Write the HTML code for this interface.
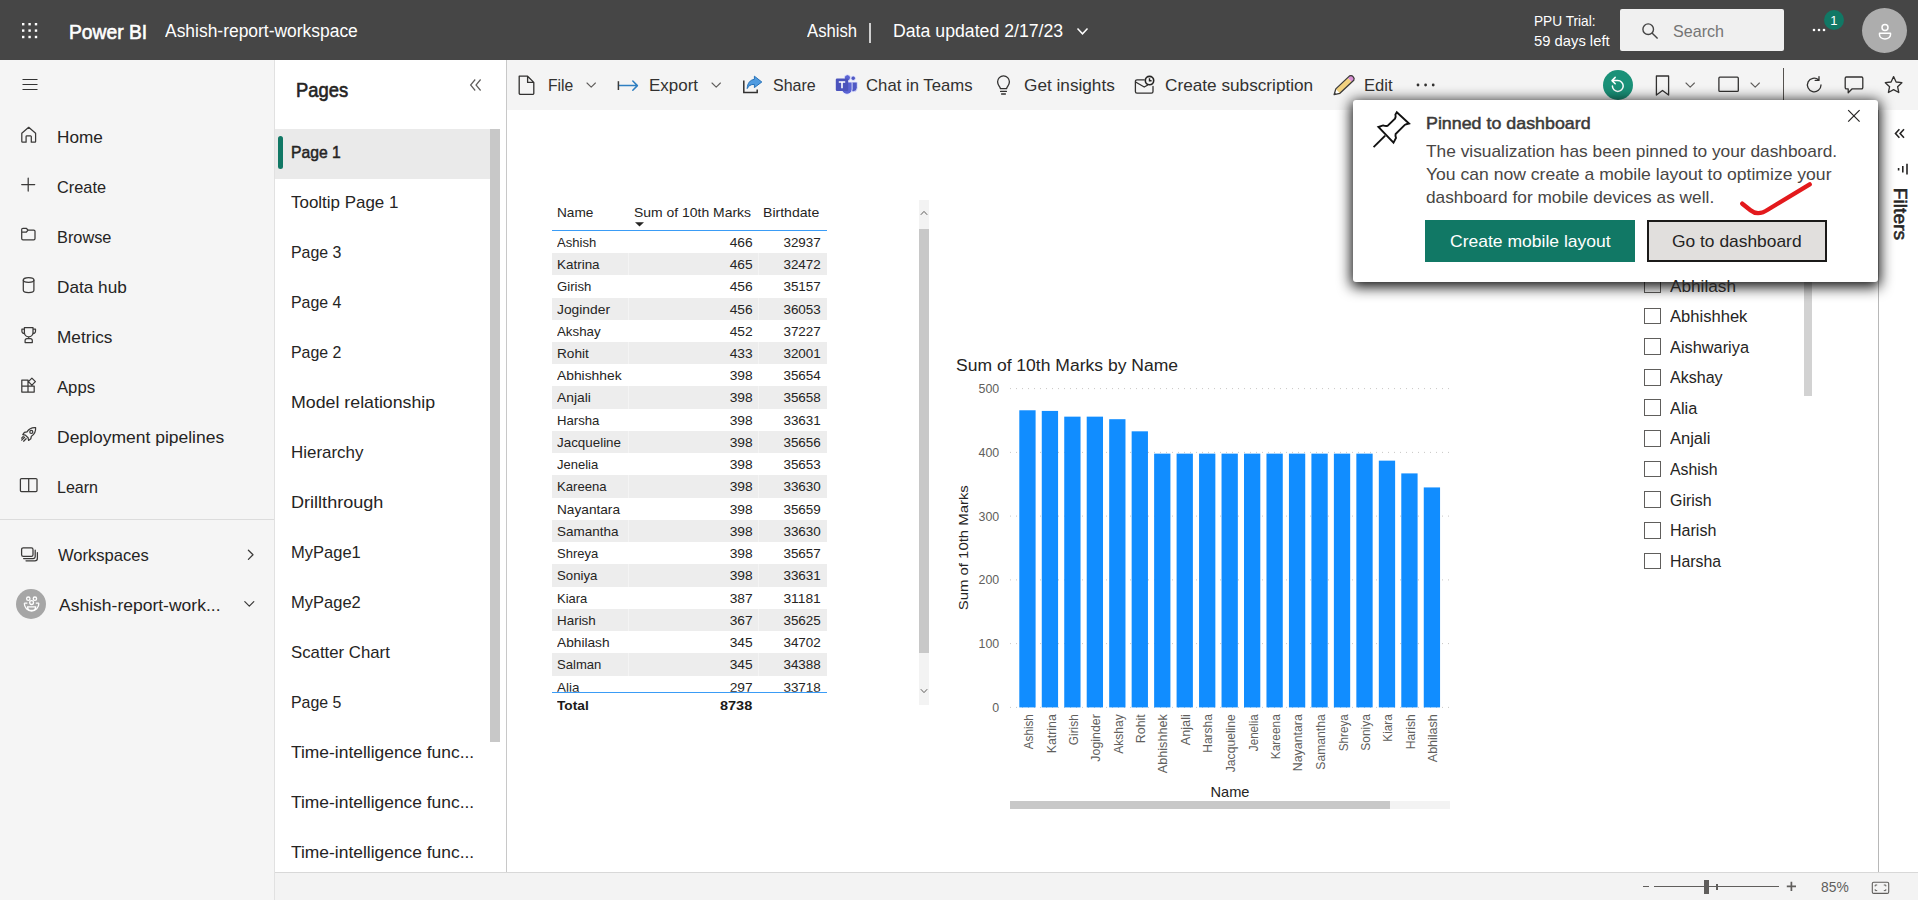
<!DOCTYPE html>
<html><head><meta charset="utf-8"><title>Power BI</title>
<style>
html,body{margin:0;padding:0;}
body{width:1918px;height:900px;overflow:hidden;position:relative;background:#fff;font-family:"Liberation Sans", sans-serif;}
.a{position:absolute;}
svg{position:absolute;overflow:visible;}
</style></head><body>
<div class="a" style="left:0;top:0;width:1918px;height:60px;background:#464646;"></div>
<div class="a" style="left:0;top:60px;width:274px;height:840px;background:#f5f5f5;border-right:1px solid #e1e1e1;"></div>
<div class="a" style="left:275px;top:60px;width:231px;height:812px;background:#fff;border-right:1px solid #c8c8c8;"></div>
<div class="a" style="left:507px;top:60px;width:1411px;height:50px;background:#f4f4f4;"></div>
<div class="a" style="left:275px;top:872px;width:1643px;height:28px;background:#f3f3f3;border-top:1px solid #d8d8d8;box-sizing:border-box;"></div>
<div class="a" style="left:1878px;top:110px;width:1px;height:762px;background:#b8b8b8;"></div>
<svg width="1918" height="60" style="left:0;top:0"><rect x="22.0" y="23.0" width="2.4" height="2.4" fill="#fff"/><rect x="22.0" y="29.4" width="2.4" height="2.4" fill="#fff"/><rect x="22.0" y="35.8" width="2.4" height="2.4" fill="#fff"/><rect x="28.4" y="23.0" width="2.4" height="2.4" fill="#fff"/><rect x="28.4" y="29.4" width="2.4" height="2.4" fill="#fff"/><rect x="28.4" y="35.8" width="2.4" height="2.4" fill="#fff"/><rect x="34.8" y="23.0" width="2.4" height="2.4" fill="#fff"/><rect x="34.8" y="29.4" width="2.4" height="2.4" fill="#fff"/><rect x="34.8" y="35.8" width="2.4" height="2.4" fill="#fff"/></svg>
<div class="a" style="left:869px;top:23px;width:1.5px;height:20px;background:#cfcfcf;"></div>
<svg width="14" height="10" style="left:1076px;top:27px"><path d="M1.5 1.5 L6.5 6.8 L11.5 1.5" fill="none" stroke="#fff" stroke-width="1.5"/></svg>
<div class="a" style="left:1620px;top:9px;width:164px;height:42px;background:#f0f0f0;border-radius:2px;"></div>
<svg width="20" height="20" style="left:1641.4px;top:22px"><circle cx="7.2" cy="7.2" r="5.3" fill="none" stroke="#444" stroke-width="1.4"/><path d="M11 11 L16.6 16.6" stroke="#444" stroke-width="1.4" fill="none"/></svg>
<svg width="20" height="6" style="left:1811px;top:27.3px"><circle cx="3" cy="3" r="1.3" fill="#fff"/><circle cx="8" cy="3" r="1.3" fill="#fff"/><circle cx="13" cy="3" r="1.3" fill="#fff"/></svg>
<div class="a" style="left:1823.9px;top:10.3px;width:20px;height:20px;border-radius:50%;background:#117865;"></div>
<div class="a" style="left:1862px;top:8px;width:45px;height:45px;border-radius:50%;background:#adadad;"></div>
<svg width="20" height="20" style="left:1874.5px;top:21.8px"><circle cx="10" cy="5.5" r="3" fill="none" stroke="#fff" stroke-width="1.5"/><path d="M4.5 11.2 h11 v1.6 a5.5 4.2 0 0 1 -11 0 z" fill="none" stroke="#fff" stroke-width="1.5" stroke-linejoin="round"/></svg>
<svg width="20" height="14" style="left:22px;top:78px"><path d="M0.5 1.5h15M0.5 6.5h15M0.5 11.5h15" stroke="#333" stroke-width="1.2" fill="none"/></svg>
<div class="a" style="left:0;top:519px;width:274px;height:1px;background:#dcdcdc;"></div>
<svg width="20" height="20" style="left:19px;top:125px"><path d="M2.8 8.3 L9.7 2.3 L16.6 8.3 V16.4 a0.8 0.8 0 0 1 -0.8 0.8 H12.3 V11.6 a0.7 0.7 0 0 0 -0.7 -0.7 H7.8 a0.7 0.7 0 0 0 -0.7 0.7 V17.2 H3.6 a0.8 0.8 0 0 1 -0.8 -0.8 Z" fill="none" stroke="#3b3a39" stroke-width="1.25" stroke-linejoin="round" stroke-linecap="round"/></svg>
<svg width="20" height="20" style="left:19px;top:175px"><path d="M9.2 3 V16 M2.7 9.5 H15.7" fill="none" stroke="#3b3a39" stroke-width="1.25" stroke-linejoin="round" stroke-linecap="round"/></svg>
<svg width="20" height="20" style="left:19px;top:225px"><path d="M2.7 6.2 V4.6 a1.3 1.3 0 0 1 1.3 -1.3 H7.2 l1.8 1.7 H14.7 a1.3 1.3 0 0 1 1.3 1.3 V13.6 a1.3 1.3 0 0 1 -1.3 1.3 H4 a1.3 1.3 0 0 1 -1.3 -1.3 Z M2.7 7 H7.4 l1.7 -1.9" fill="none" stroke="#3b3a39" stroke-width="1.25" stroke-linejoin="round" stroke-linecap="round"/></svg>
<svg width="20" height="20" style="left:19px;top:275px"><ellipse cx="9.6" cy="5" rx="5.3" ry="2.3" fill="none" stroke="#3b3a39" stroke-width="1.25" stroke-linejoin="round" stroke-linecap="round"/><path d="M4.3 5 V15.2 a5.3 2.3 0 0 0 10.6 0 V5" fill="none" stroke="#3b3a39" stroke-width="1.25" stroke-linejoin="round" stroke-linecap="round"/></svg>
<svg width="20" height="20" style="left:19px;top:325px"><path d="M5.4 2.6 H14 V7.6 a4.3 4.3 0 0 1 -8.6 0 Z M5.4 4.2 H2.9 V6.2 a2.4 2.4 0 0 0 2.7 2.3 M14 4.2 H16.5 V6.2 a2.4 2.4 0 0 1 -2.7 2.3 M9.7 12 V13.6 M6.1 17.6 V15.4 a1.7 1.7 0 0 1 1.7 -1.7 H11.6 a1.7 1.7 0 0 1 1.7 1.7 V17.6 Z" fill="none" stroke="#3b3a39" stroke-width="1.25" stroke-linejoin="round" stroke-linecap="round"/></svg>
<svg width="20" height="20" style="left:19px;top:375px"><path d="M2.8 5 H9 V17 H2.8 Z M2.8 11 H15.2 V17 H9 M9.4 6.6 L12.9 3.1 L16.4 6.6 L12.9 10.1 Z" fill="none" stroke="#3b3a39" stroke-width="1.25" stroke-linejoin="round" stroke-linecap="round"/></svg>
<svg width="20" height="20" style="left:19px;top:425px"><path d="M16.6 2.6 c-3.6 -0.3 -6.6 1 -8.6 4.2 l-2.6 0.6 l-1.6 2.2 l2.6 0.5 l2.7 2.7 l0.5 2.6 l2.2 -1.6 l0.6 -2.6 c3.2 -2 4.5 -5 4.2 -8.6 Z" fill="none" stroke="#3b3a39" stroke-width="1.25" stroke-linejoin="round" stroke-linecap="round"/><circle cx="12.3" cy="6.9" r="1.5" fill="none" stroke="#3b3a39" stroke-width="1.25" stroke-linejoin="round" stroke-linecap="round"/><path d="M5.6 12.2 L2.7 15.1 M7.1 13.7 L4.6 16.2 M4.3 11.4 L2.6 13.1" fill="none" stroke="#3b3a39" stroke-width="1.25" stroke-linejoin="round" stroke-linecap="round"/></svg>
<svg width="20" height="20" style="left:19px;top:475px"><path d="M1.4 4.6 a1.1 1.1 0 0 1 1.1 -1.1 H9.7 V16.6 H2.5 a1.1 1.1 0 0 1 -1.1 -1.1 Z M9.7 3.5 H16.9 a1.1 1.1 0 0 1 1.1 1.1 V15.5 a1.1 1.1 0 0 1 -1.1 1.1 H9.7" fill="none" stroke="#3b3a39" stroke-width="1.25" stroke-linejoin="round" stroke-linecap="round"/></svg>
<svg width="22" height="20" style="left:19.2px;top:544.5px"><rect x="2.6" y="2.8" width="11.4" height="8.6" rx="1.6" fill="none" stroke="#3b3a39" stroke-width="1.25" stroke-linejoin="round" stroke-linecap="round"/><path d="M4.6 13.6 H14.2 a2 2 0 0 0 2 -2 V5.2 M7 15.8 H15.8 a2.6 2.6 0 0 0 2.6 -2.6 V7.6" fill="none" stroke="#3b3a39" stroke-width="1.25" stroke-linejoin="round" stroke-linecap="round"/></svg>
<svg width="10" height="14" style="left:246px;top:547.5px"><path d="M2.4 2.2 L7 6.8 L2.4 11.4" fill="none" stroke="#3b3a39" stroke-width="1.25" stroke-linejoin="round" stroke-linecap="round"/></svg>
<div class="a" style="left:16px;top:589px;width:30px;height:30px;border-radius:50%;background:#a6a6a6;"></div>
<svg width="1918" height="900" style="left:0;top:0"><g fill="none" stroke="#fff" stroke-width="1.3"><circle cx="28.3" cy="598.7" r="1.7"/><circle cx="34.9" cy="598.7" r="1.7"/><circle cx="31.6" cy="602.6" r="1.9"/><path d="M24.3 603.2 H27.4 M35.8 603.2 H38.9 M24.3 603.2 a7.3 7.8 0 0 0 14.6 0 M27.6 606.9 H35.6 a4 3.6 0 0 1 -8 0 Z"/></g></svg>
<svg width="14" height="10" style="left:243px;top:600px"><path d="M1.8 1.6 L6.3 6.1 L10.8 1.6" fill="none" stroke="#3b3a39" stroke-width="1.25" stroke-linejoin="round" stroke-linecap="round"/></svg>
<svg width="14" height="14" style="left:469px;top:78px"><path d="M6.2 1.5 L1.6 7 L6.2 12.5 M11.6 1.5 L7 7 L11.6 12.5" fill="none" stroke="#605e5c" stroke-width="1.2"/></svg>
<div class="a" style="left:275px;top:129px;width:215px;height:49.5px;background:#eaeaea;"></div>
<div class="a" style="left:278px;top:136px;width:5px;height:32.5px;background:#117865;border-radius:2.5px;"></div>
<div class="a" style="left:490px;top:129px;width:10px;height:613px;background:#c8c8c8;"></div>
<svg width="20" height="22" style="left:517px;top:75px"><path d="M2.2 1.2 H10.6 L16.8 7.4 V18.2 a1.2 1.2 0 0 1 -1.2 1.2 H3.4 a1.2 1.2 0 0 1 -1.2 -1.2 Z M10.6 1.2 V7.4 H16.8" fill="none" stroke="#323130" stroke-width="1.3" stroke-linejoin="round" stroke-linecap="round"/></svg>
<svg width="12" height="8" style="left:586px;top:82px"><path d="M1 1 L5.2 5.2 L9.4 1" fill="none" stroke="#605e5c" stroke-width="1.1" stroke-linejoin="round" stroke-linecap="round"/></svg>
<svg width="22" height="14" style="left:617px;top:79px"><path d="M1.6 6.6 H20.4 M15.8 2 L20.4 6.6 L15.8 11.2" fill="none" stroke="#2f7fc1" stroke-width="1.5" stroke-linejoin="round" stroke-linecap="round"/><path d="M1.4 2.2 V11" fill="none" stroke="#3b3a39" stroke-width="1.5"/></svg>
<svg width="12" height="8" style="left:710.5px;top:82px"><path d="M1 1 L5.2 5.2 L9.4 1" fill="none" stroke="#605e5c" stroke-width="1.1" stroke-linejoin="round" stroke-linecap="round"/></svg>
<svg width="22" height="22" style="left:742px;top:74px"><path d="M1.8 6.4 V18.6 H15.2 V15.4" fill="none" stroke="#323130" stroke-width="1.5"/><path d="M12.4 2.2 L19.8 8 L12.4 13.6 V10.4 C8.6 10.2 6.4 12 5.2 14.6 C5.4 9.4 8 5.8 12.4 5.4 Z" fill="#4f9be0" stroke="#2571b8" stroke-width="1" stroke-linejoin="round"/></svg>
<svg width="24" height="22" style="left:835px;top:74px"><g stroke="#e8eaff" stroke-width="0.9"><circle cx="18.2" cy="4.2" r="2.3" fill="#4f58c4"/><path d="M15.4 8 H21.4 a0.9 0.9 0 0 1 0.9 0.9 V13.8 a3.9 3.9 0 0 1 -3.9 3.9 H16.4 Z" fill="#4f58c4"/><circle cx="12.4" cy="3.8" r="3.1" fill="#5a63d3"/><path d="M7 8 H16.2 a0.9 0.9 0 0 1 0.9 0.9 V15.2 a5.1 5.1 0 0 1 -10.2 0 Z" fill="#5a63d3"/></g><rect x="0.8" y="4.6" width="12.4" height="12.4" rx="1.2" fill="#4b53bc"/><path d="M3.8 8 H10.2 M7 8 V14.2" stroke="#fff" stroke-width="1.6" fill="none"/></svg>
<svg width="18" height="24" style="left:995px;top:74px"><path d="M5.4 14.6 C5 12.6 2.6 11.4 2.6 7.8 a5.9 5.9 0 0 1 11.8 0 C14.4 11.4 12 12.6 11.6 14.6 Z M5.6 17.4 H11.4 M6.6 20 H10.4" fill="none" stroke="#323130" stroke-width="1.3" stroke-linejoin="round" stroke-linecap="round"/></svg>
<svg width="24" height="22" style="left:1134px;top:75px"><path d="M10.2 4.8 H3 a1.6 1.6 0 0 0 -1.6 1.6 V16.6 a1.6 1.6 0 0 0 1.6 1.6 H17.4 a1.6 1.6 0 0 0 1.6 -1.6 V11.4 M1.6 7 L10.2 12 L13.4 10.2" fill="none" stroke="#323130" stroke-width="1.3" stroke-linejoin="round" stroke-linecap="round"/><circle cx="15.5" cy="5.6" r="4.2" fill="none" stroke="#252423" stroke-width="1.6"/><path d="M15.5 3.2 V5.8 H17.6" fill="none" stroke="#252423" stroke-width="1.4"/></svg>
<svg width="1918" height="900" style="left:0;top:0"><path d="M1334.1 94.7 L1339.9 93.3 L1335.8 88.9 Z" fill="#fff"/><path d="M1339.9 93.3 L1351.8 82.1 L1347.7 77.7 L1335.8 88.9 Z" fill="#f2d27e"/><path d="M1351.8 82.1 L1353.8 80.2 Q1354.8 78.2 1353.1 76.7 Q1351.7 75.0 1349.6 75.9 L1347.7 77.7 Z" fill="#d88fd3"/><path d="M1334.1 94.7 L1336.3 94.2 L1334.8 92.5 Z" fill="#3b3a39"/><path d="M1334.1 94.7 L1339.9 93.3 L1353.8 80.2 Q1354.8 78.2 1353.1 76.7 Q1351.7 75.0 1349.6 75.9 L1335.8 88.9 Z" fill="none" stroke="#3b3a39" stroke-width="1.3" stroke-linejoin="round"/></svg>
<svg width="22" height="6" style="left:1415px;top:82px"><circle cx="3" cy="3" r="1.4" fill="#323130"/><circle cx="10.6" cy="3" r="1.4" fill="#323130"/><circle cx="18.2" cy="3" r="1.4" fill="#323130"/></svg>
<div class="a" style="left:1602.7px;top:70.3px;width:30px;height:30px;border-radius:50%;background:#1a9178;"></div>
<svg width="20" height="20" style="left:1608px;top:75px"><path d="M4.4 5.6 H9.8 a5.4 5.4 0 1 1 -5.4 5.4 M7.2 2.4 L4 5.6 L7.2 8.8" fill="none" stroke="#fff" stroke-width="1.5" stroke-linecap="round" stroke-linejoin="round"/></svg>
<svg width="16" height="22" style="left:1655px;top:74.7px"><path d="M1.4 1 H13.6 V20 L7.5 15.4 L1.4 20 Z" fill="none" stroke="#323130" stroke-width="1.3" stroke-linejoin="round" stroke-linecap="round"/></svg>
<svg width="12" height="8" style="left:1685px;top:82px"><path d="M1 1 L5.2 5.2 L9.4 1" fill="none" stroke="#605e5c" stroke-width="1.1" stroke-linejoin="round" stroke-linecap="round"/></svg>
<svg width="22" height="18" style="left:1717.5px;top:76px"><rect x="0.9" y="1.2" width="19.4" height="14.2" rx="1" fill="none" stroke="#323130" stroke-width="1.3" stroke-linejoin="round" stroke-linecap="round"/></svg>
<svg width="12" height="8" style="left:1750px;top:82px"><path d="M1 1 L5.2 5.2 L9.4 1" fill="none" stroke="#605e5c" stroke-width="1.1" stroke-linejoin="round" stroke-linecap="round"/></svg>
<div class="a" style="left:1783px;top:68px;width:1px;height:42px;background:#55524f;"></div>
<svg width="20" height="20" style="left:1805px;top:75px"><path d="M16 10 a6.8 6.8 0 1 1 -2.4 -5.2 M14 1.6 V5.4 H10.2" fill="none" stroke="#323130" stroke-width="1.3" stroke-linejoin="round" stroke-linecap="round"/></svg>
<svg width="22" height="20" style="left:1843.5px;top:76px"><path d="M2.4 1 H17.6 a1.2 1.2 0 0 1 1.2 1.2 V11.6 a1.2 1.2 0 0 1 -1.2 1.2 H8.2 L4.2 16.8 V12.8 H2.4 a1.2 1.2 0 0 1 -1.2 -1.2 V2.2 a1.2 1.2 0 0 1 1.2 -1.2 Z" fill="none" stroke="#323130" stroke-width="1.3" stroke-linejoin="round" stroke-linecap="round"/></svg>
<svg width="20" height="20" style="left:1884px;top:75px"><path d="M9.6 1.6 L12.1 7 L17.9 7.7 L13.6 11.7 L14.8 17.5 L9.6 14.6 L4.4 17.5 L5.6 11.7 L1.3 7.7 L7.1 7 Z" fill="none" stroke="#323130" stroke-width="1.3" stroke-linejoin="round" stroke-linecap="round"/></svg>
<div class="a" style="left:551.7px;top:230.8px;width:275.3px;height:461.2px;overflow:hidden;"><div class="a" style="left:0;top:22.24px;width:276px;height:22.24px;background:#ededed;"></div><div class="a" style="left:76px;top:22.24px;width:1px;height:22.24px;background:#f4f4f4;"></div><div class="a" style="left:206px;top:22.24px;width:1px;height:22.24px;background:#f4f4f4;"></div><div class="a" style="left:0;top:66.72px;width:276px;height:22.24px;background:#ededed;"></div><div class="a" style="left:76px;top:66.72px;width:1px;height:22.24px;background:#f4f4f4;"></div><div class="a" style="left:206px;top:66.72px;width:1px;height:22.24px;background:#f4f4f4;"></div><div class="a" style="left:0;top:111.20px;width:276px;height:22.24px;background:#ededed;"></div><div class="a" style="left:76px;top:111.20px;width:1px;height:22.24px;background:#f4f4f4;"></div><div class="a" style="left:206px;top:111.20px;width:1px;height:22.24px;background:#f4f4f4;"></div><div class="a" style="left:0;top:155.68px;width:276px;height:22.24px;background:#ededed;"></div><div class="a" style="left:76px;top:155.68px;width:1px;height:22.24px;background:#f4f4f4;"></div><div class="a" style="left:206px;top:155.68px;width:1px;height:22.24px;background:#f4f4f4;"></div><div class="a" style="left:0;top:200.16px;width:276px;height:22.24px;background:#ededed;"></div><div class="a" style="left:76px;top:200.16px;width:1px;height:22.24px;background:#f4f4f4;"></div><div class="a" style="left:206px;top:200.16px;width:1px;height:22.24px;background:#f4f4f4;"></div><div class="a" style="left:0;top:244.64px;width:276px;height:22.24px;background:#ededed;"></div><div class="a" style="left:76px;top:244.64px;width:1px;height:22.24px;background:#f4f4f4;"></div><div class="a" style="left:206px;top:244.64px;width:1px;height:22.24px;background:#f4f4f4;"></div><div class="a" style="left:0;top:289.12px;width:276px;height:22.24px;background:#ededed;"></div><div class="a" style="left:76px;top:289.12px;width:1px;height:22.24px;background:#f4f4f4;"></div><div class="a" style="left:206px;top:289.12px;width:1px;height:22.24px;background:#f4f4f4;"></div><div class="a" style="left:0;top:333.60px;width:276px;height:22.24px;background:#ededed;"></div><div class="a" style="left:76px;top:333.60px;width:1px;height:22.24px;background:#f4f4f4;"></div><div class="a" style="left:206px;top:333.60px;width:1px;height:22.24px;background:#f4f4f4;"></div><div class="a" style="left:0;top:378.08px;width:276px;height:22.24px;background:#ededed;"></div><div class="a" style="left:76px;top:378.08px;width:1px;height:22.24px;background:#f4f4f4;"></div><div class="a" style="left:206px;top:378.08px;width:1px;height:22.24px;background:#f4f4f4;"></div><div class="a" style="left:0;top:422.56px;width:276px;height:22.24px;background:#ededed;"></div><div class="a" style="left:76px;top:422.56px;width:1px;height:22.24px;background:#f4f4f4;"></div><div class="a" style="left:206px;top:422.56px;width:1px;height:22.24px;background:#f4f4f4;"></div></div>
<svg width="10" height="6" style="left:634.5px;top:221.5px"><path d="M0 0.3 H9 L4.5 4.6 Z" fill="#252423"/></svg>
<div class="a" style="left:551.7px;top:229.6px;width:275.3px;height:1.2px;background:#3a9cf6;"></div>
<div class="a" style="left:551.7px;top:691.6px;width:275.3px;height:1.2px;background:#3a9cf6;"></div>
<div class="a" style="left:919.2px;top:200px;width:10px;height:505px;background:#f3f3f3;"></div>
<div class="a" style="left:919.2px;top:228.5px;width:10px;height:424px;background:#c8c8c8;"></div>
<svg width="10" height="8" style="left:919.2px;top:209px"><path d="M1.8 5.8 L5 2.4 L8.2 5.8" fill="none" stroke="#605e5c" stroke-width="1"/></svg>
<svg width="10" height="8" style="left:919.2px;top:687px"><path d="M1.8 2.2 L5 5.6 L8.2 2.2" fill="none" stroke="#605e5c" stroke-width="1"/></svg>
<svg width="1918" height="900" style="left:0;top:0"><path d="M1010 707.4 H1450" stroke="#c9c7c5" stroke-width="1" stroke-dasharray="1 5" fill="none"/><path d="M1010 643.6 H1450" stroke="#c9c7c5" stroke-width="1" stroke-dasharray="1 5" fill="none"/><path d="M1010 579.9 H1450" stroke="#c9c7c5" stroke-width="1" stroke-dasharray="1 5" fill="none"/><path d="M1010 516.1 H1450" stroke="#c9c7c5" stroke-width="1" stroke-dasharray="1 5" fill="none"/><path d="M1010 452.4 H1450" stroke="#c9c7c5" stroke-width="1" stroke-dasharray="1 5" fill="none"/><path d="M1010 388.6 H1450" stroke="#c9c7c5" stroke-width="1" stroke-dasharray="1 5" fill="none"/><rect x="1019.30" y="410.28" width="16.3" height="297.12" fill="#118dff"/><rect x="1041.77" y="410.92" width="16.3" height="296.48" fill="#118dff"/><rect x="1064.24" y="416.65" width="16.3" height="290.75" fill="#118dff"/><rect x="1086.71" y="416.65" width="16.3" height="290.75" fill="#118dff"/><rect x="1109.18" y="419.20" width="16.3" height="288.20" fill="#118dff"/><rect x="1131.65" y="431.32" width="16.3" height="276.08" fill="#118dff"/><rect x="1154.12" y="453.64" width="16.3" height="253.76" fill="#118dff"/><rect x="1176.59" y="453.64" width="16.3" height="253.76" fill="#118dff"/><rect x="1199.06" y="453.64" width="16.3" height="253.76" fill="#118dff"/><rect x="1221.53" y="453.64" width="16.3" height="253.76" fill="#118dff"/><rect x="1244.00" y="453.64" width="16.3" height="253.76" fill="#118dff"/><rect x="1266.47" y="453.64" width="16.3" height="253.76" fill="#118dff"/><rect x="1288.94" y="453.64" width="16.3" height="253.76" fill="#118dff"/><rect x="1311.41" y="453.64" width="16.3" height="253.76" fill="#118dff"/><rect x="1333.88" y="453.64" width="16.3" height="253.76" fill="#118dff"/><rect x="1356.35" y="453.64" width="16.3" height="253.76" fill="#118dff"/><rect x="1378.82" y="460.65" width="16.3" height="246.75" fill="#118dff"/><rect x="1401.29" y="473.40" width="16.3" height="234.00" fill="#118dff"/><rect x="1423.76" y="487.43" width="16.3" height="219.97" fill="#118dff"/></svg>
<div class="a" style="left:1010px;top:801px;width:440px;height:8px;background:#f3f3f3;"></div>
<div class="a" style="left:1010px;top:801px;width:380px;height:8px;background:#c8c8c8;"></div>
<div class="a" style="left:1644px;top:275.7px;width:14.9px;height:14.9px;border:1px solid #605e5c;background:#fff;"></div>
<div class="a" style="left:1644px;top:307.5px;width:14.9px;height:14.9px;border:1px solid #605e5c;background:#fff;"></div>
<div class="a" style="left:1644px;top:338.1px;width:14.9px;height:14.9px;border:1px solid #605e5c;background:#fff;"></div>
<div class="a" style="left:1644px;top:368.8px;width:14.9px;height:14.9px;border:1px solid #605e5c;background:#fff;"></div>
<div class="a" style="left:1644px;top:399.4px;width:14.9px;height:14.9px;border:1px solid #605e5c;background:#fff;"></div>
<div class="a" style="left:1644px;top:430.0px;width:14.9px;height:14.9px;border:1px solid #605e5c;background:#fff;"></div>
<div class="a" style="left:1644px;top:460.6px;width:14.9px;height:14.9px;border:1px solid #605e5c;background:#fff;"></div>
<div class="a" style="left:1644px;top:491.2px;width:14.9px;height:14.9px;border:1px solid #605e5c;background:#fff;"></div>
<div class="a" style="left:1644px;top:521.9px;width:14.9px;height:14.9px;border:1px solid #605e5c;background:#fff;"></div>
<div class="a" style="left:1644px;top:552.5px;width:14.9px;height:14.9px;border:1px solid #605e5c;background:#fff;"></div>
<div class="a" style="left:1803.6px;top:260px;width:8px;height:136px;background:#d2d2d2;"></div>
<svg width="12" height="12" style="left:1894px;top:128px"><path d="M5.4 1.2 L1.5 5.5 L5.4 9.8 M10 1.2 L6.1 5.5 L10 9.8" fill="none" stroke="#252423" stroke-width="1.6"/></svg>
<svg width="14" height="14" style="left:1896px;top:162.6px"><path d="M11 0.8 V11.6 M6.8 2.9 V9.5 M2.6 5 V7.4" fill="none" stroke="#252423" stroke-width="1.6"/></svg>
<div class="a" style="left:1643px;top:885.6px;width:6px;height:1.7px;background:#605e5c;"></div>
<div class="a" style="left:1654px;top:886px;width:125px;height:1px;background:#605e5c;"></div>
<div class="a" style="left:1704px;top:880px;width:5.2px;height:14px;background:#605e5c;"></div>
<div class="a" style="left:1716.2px;top:884.2px;width:1.5px;height:5.6px;background:#605e5c;"></div>
<svg width="12" height="12" style="left:1786px;top:881px"><path d="M5.4 0.8 V10 M0.8 5.4 H10" stroke="#605e5c" stroke-width="1.7" fill="none"/></svg>
<svg width="20" height="14" style="left:1871px;top:881px"><rect x="1.3" y="1.2" width="16.4" height="11.2" rx="1.4" fill="none" stroke="#605e5c" stroke-width="1.1"/><path d="M4.2 5.4 V4 H6.2 M12.8 4 H14.8 V5.4 M14.8 8.2 V9.6 H12.8 M6.2 9.6 H4.2 V8.2" fill="none" stroke="#605e5c" stroke-width="1"/></svg>
<div class="a" style="left:1353px;top:100px;width:525px;height:181.8px;background:#fff;border-radius:3px;box-shadow:0 3px 14px 1.5px rgba(0,0,0,0.95);"></div>
<svg width="1918" height="900" style="left:0;top:0"><path d="M1396.8 112.2 L1409 123.5 C1407 124 1405.6 124.2 1404.8 124.9 L1395.6 134 C1395.2 135.4 1395.6 136.8 1396 138 L1393.5 142.6 L1378.4 127 L1383 125.4 C1384.6 125.9 1386 126.2 1387.5 125.9 L1395 118.6 C1395.8 117.4 1395.8 116 1395.4 114.6 Z" fill="none" stroke="#111" stroke-width="1.9" stroke-linejoin="miter"/><path d="M1385.2 135.6 L1373.6 147.2" stroke="#111" stroke-width="1.9" fill="none"/></svg>
<svg width="14" height="14" style="left:1847px;top:109.4px"><path d="M1.2 1.2 L12.6 12.6 M12.6 1.2 L1.2 12.6" stroke="#252423" stroke-width="1.2" fill="none"/></svg>
<div class="a" style="left:1425px;top:220px;width:210px;height:41.8px;background:#117865;"></div>
<div class="a" style="left:1647px;top:220px;width:179.8px;height:41.8px;background:#e1dfdd;border:2.2px solid #1b1a19;box-sizing:border-box;"></div>
<svg width="1918" height="900" style="left:0;top:0"><path d="M1742.3 203.7 L1750.5 210.3 C1754 213.2 1758 214 1763 212.2 C1765 211.4 1766 210.8 1767.3 210 L1809.7 184.3" fill="none" stroke="#e3191c" stroke-width="4.4" stroke-linecap="round" stroke-linejoin="round"/></svg>
<span class="t" style="position:absolute;left:69.40px;transform-origin:0 50%;transform:scaleX(0.9623);top:21.77px;font-size:20px;line-height:1;font-weight:400;color:#fff;white-space:nowrap;-webkit-text-stroke:0.60px #fff;">Power BI</span>
<span class="t" style="position:absolute;left:165.20px;transform-origin:0 50%;transform:scaleX(0.9685);top:21.74px;font-size:18px;line-height:1;font-weight:400;color:#fff;white-space:nowrap;">Ashish-report-workspace</span>
<span class="t" style="position:absolute;left:807.30px;transform-origin:0 50%;transform:scaleX(0.9272);top:21.74px;font-size:18px;line-height:1;font-weight:400;color:#fff;white-space:nowrap;">Ashish</span>
<span class="t" style="position:absolute;left:893.00px;transform-origin:0 50%;transform:scaleX(0.9829);top:21.74px;font-size:18px;line-height:1;font-weight:400;color:#fff;white-space:nowrap;">Data updated 2/17/23</span>
<span class="t" style="position:absolute;left:1534.00px;transform-origin:0 50%;transform:scaleX(0.9423);top:14.15px;font-size:14.5px;line-height:1;font-weight:400;color:#fff;white-space:nowrap;">PPU Trial:</span>
<span class="t" style="position:absolute;left:1534.00px;transform-origin:0 50%;transform:scaleX(1.0193);top:34.15px;font-size:14.5px;line-height:1;font-weight:400;color:#fff;white-space:nowrap;">59 days left</span>
<span class="t" style="position:absolute;left:1673.00px;transform-origin:0 50%;transform:scaleX(0.9466);top:23.13px;font-size:17px;line-height:1;font-weight:400;color:#757575;white-space:nowrap;">Search</span>
<span class="t" style="position:absolute;left:1833.90px;transform:translateX(-50%) ;top:14.28px;font-size:13px;line-height:1;font-weight:400;color:#fff;white-space:nowrap;">1</span>
<span class="t" style="position:absolute;left:57.00px;transform-origin:0 50%;transform:scaleX(1.0097);top:129.03px;font-size:17px;line-height:1;font-weight:400;color:#252423;white-space:nowrap;">Home</span>
<span class="t" style="position:absolute;left:57.00px;transform-origin:0 50%;transform:scaleX(0.9602);top:179.03px;font-size:17px;line-height:1;font-weight:400;color:#252423;white-space:nowrap;">Create</span>
<span class="t" style="position:absolute;left:57.00px;transform-origin:0 50%;transform:scaleX(0.9596);top:229.03px;font-size:17px;line-height:1;font-weight:400;color:#252423;white-space:nowrap;">Browse</span>
<span class="t" style="position:absolute;left:57.00px;transform-origin:0 50%;transform:scaleX(1.0116);top:279.03px;font-size:17px;line-height:1;font-weight:400;color:#252423;white-space:nowrap;">Data hub</span>
<span class="t" style="position:absolute;left:57.00px;transform-origin:0 50%;transform:scaleX(1.0113);top:329.03px;font-size:17px;line-height:1;font-weight:400;color:#252423;white-space:nowrap;">Metrics</span>
<span class="t" style="position:absolute;left:57.00px;transform-origin:0 50%;transform:scaleX(0.9806);top:379.03px;font-size:17px;line-height:1;font-weight:400;color:#252423;white-space:nowrap;">Apps</span>
<span class="t" style="position:absolute;left:57.00px;transform-origin:0 50%;transform:scaleX(1.0286);top:429.03px;font-size:17px;line-height:1;font-weight:400;color:#252423;white-space:nowrap;">Deployment pipelines</span>
<span class="t" style="position:absolute;left:57.00px;transform-origin:0 50%;transform:scaleX(0.9429);top:479.03px;font-size:17px;line-height:1;font-weight:400;color:#252423;white-space:nowrap;">Learn</span>
<span class="t" style="position:absolute;left:58.00px;transform-origin:0 50%;transform:scaleX(0.9741);top:546.73px;font-size:17px;line-height:1;font-weight:400;color:#252423;white-space:nowrap;">Workspaces</span>
<span class="t" style="position:absolute;left:59.40px;transform-origin:0 50%;transform:scaleX(1.0298);top:596.53px;font-size:17px;line-height:1;font-weight:400;color:#252423;white-space:nowrap;">Ashish-report-work...</span>
<span class="t" style="position:absolute;left:295.60px;transform-origin:0 50%;transform:scaleX(0.9186);top:79.67px;font-size:20px;line-height:1;font-weight:400;color:#252423;white-space:nowrap;-webkit-text-stroke:0.60px #252423;">Pages</span>
<span class="t" style="position:absolute;left:290.60px;transform-origin:0 50%;transform:scaleX(0.9222);top:144.23px;font-size:17px;line-height:1;font-weight:400;color:#252423;white-space:nowrap;-webkit-text-stroke:0.51px #252423;">Page 1</span>
<span class="t" style="position:absolute;left:290.60px;transform-origin:0 50%;transform:scaleX(0.9968);top:194.33px;font-size:17px;line-height:1;font-weight:400;color:#252423;white-space:nowrap;">Tooltip Page 1</span>
<span class="t" style="position:absolute;left:290.60px;transform-origin:0 50%;transform:scaleX(0.9352);top:244.33px;font-size:17px;line-height:1;font-weight:400;color:#252423;white-space:nowrap;">Page 3</span>
<span class="t" style="position:absolute;left:290.60px;transform-origin:0 50%;transform:scaleX(0.9352);top:294.33px;font-size:17px;line-height:1;font-weight:400;color:#252423;white-space:nowrap;">Page 4</span>
<span class="t" style="position:absolute;left:290.60px;transform-origin:0 50%;transform:scaleX(0.9352);top:344.33px;font-size:17px;line-height:1;font-weight:400;color:#252423;white-space:nowrap;">Page 2</span>
<span class="t" style="position:absolute;left:290.60px;transform-origin:0 50%;transform:scaleX(1.0452);top:394.33px;font-size:17px;line-height:1;font-weight:400;color:#252423;white-space:nowrap;">Model relationship</span>
<span class="t" style="position:absolute;left:290.60px;transform-origin:0 50%;transform:scaleX(0.9952);top:444.33px;font-size:17px;line-height:1;font-weight:400;color:#252423;white-space:nowrap;">Hierarchy</span>
<span class="t" style="position:absolute;left:290.60px;transform-origin:0 50%;transform:scaleX(1.0628);top:494.33px;font-size:17px;line-height:1;font-weight:400;color:#252423;white-space:nowrap;">Drillthrough</span>
<span class="t" style="position:absolute;left:290.60px;transform-origin:0 50%;transform:scaleX(0.9718);top:544.33px;font-size:17px;line-height:1;font-weight:400;color:#252423;white-space:nowrap;">MyPage1</span>
<span class="t" style="position:absolute;left:290.60px;transform-origin:0 50%;transform:scaleX(0.9718);top:594.33px;font-size:17px;line-height:1;font-weight:400;color:#252423;white-space:nowrap;">MyPage2</span>
<span class="t" style="position:absolute;left:290.60px;transform-origin:0 50%;transform:scaleX(0.9865);top:644.33px;font-size:17px;line-height:1;font-weight:400;color:#252423;white-space:nowrap;">Scatter Chart</span>
<span class="t" style="position:absolute;left:290.60px;transform-origin:0 50%;transform:scaleX(0.9352);top:694.33px;font-size:17px;line-height:1;font-weight:400;color:#252423;white-space:nowrap;">Page 5</span>
<span class="t" style="position:absolute;left:290.60px;transform-origin:0 50%;transform:scaleX(1.0241);top:744.33px;font-size:17px;line-height:1;font-weight:400;color:#252423;white-space:nowrap;">Time-intelligence func...</span>
<span class="t" style="position:absolute;left:290.60px;transform-origin:0 50%;transform:scaleX(1.0241);top:794.33px;font-size:17px;line-height:1;font-weight:400;color:#252423;white-space:nowrap;">Time-intelligence func...</span>
<span class="t" style="position:absolute;left:290.60px;transform-origin:0 50%;transform:scaleX(1.0241);top:844.33px;font-size:17px;line-height:1;font-weight:400;color:#252423;white-space:nowrap;">Time-intelligence func...</span>
<span class="t" style="position:absolute;left:547.70px;transform-origin:0 50%;transform:scaleX(0.9231);top:77.13px;font-size:17px;line-height:1;font-weight:400;color:#323130;white-space:nowrap;">File</span>
<span class="t" style="position:absolute;left:649.00px;transform-origin:0 50%;transform:scaleX(0.9971);top:77.13px;font-size:17px;line-height:1;font-weight:400;color:#323130;white-space:nowrap;">Export</span>
<span class="t" style="position:absolute;left:773.30px;transform-origin:0 50%;transform:scaleX(0.9410);top:77.13px;font-size:17px;line-height:1;font-weight:400;color:#323130;white-space:nowrap;">Share</span>
<span class="t" style="position:absolute;left:866.40px;transform-origin:0 50%;transform:scaleX(0.9838);top:77.13px;font-size:17px;line-height:1;font-weight:400;color:#323130;white-space:nowrap;">Chat in Teams</span>
<span class="t" style="position:absolute;left:1023.80px;transform-origin:0 50%;transform:scaleX(1.0115);top:77.13px;font-size:17px;line-height:1;font-weight:400;color:#323130;white-space:nowrap;">Get insights</span>
<span class="t" style="position:absolute;left:1164.80px;transform-origin:0 50%;transform:scaleX(1.0118);top:77.13px;font-size:17px;line-height:1;font-weight:400;color:#323130;white-space:nowrap;">Create subscription</span>
<span class="t" style="position:absolute;left:1364.40px;transform-origin:0 50%;transform:scaleX(0.9762);top:77.13px;font-size:17px;line-height:1;font-weight:400;color:#323130;white-space:nowrap;">Edit</span>
<span class="t" style="position:absolute;left:557.30px;transform-origin:0 50%;transform:scaleX(1.0037);top:205.98px;font-size:13.6px;line-height:1;font-weight:400;color:#252423;white-space:nowrap;">Name</span>
<span class="t" style="position:absolute;left:634.20px;transform-origin:0 50%;transform:scaleX(1.0255);top:205.98px;font-size:13.6px;line-height:1;font-weight:400;color:#252423;white-space:nowrap;">Sum of 10th Marks</span>
<span class="t" style="position:absolute;left:763.30px;transform-origin:0 50%;transform:scaleX(1.0345);top:205.98px;font-size:13.6px;line-height:1;font-weight:400;color:#252423;white-space:nowrap;">Birthdate</span>
<span class="t" style="position:absolute;left:557.30px;transform-origin:0 50%;transform:scaleX(0.9605);top:235.78px;font-size:13.6px;line-height:1;font-weight:400;color:#252423;white-space:nowrap;">Ashish</span>
<span class="t" style="position:absolute;right:1165.80px;transform-origin:100% 50%;transform:scaleX(1.0138);top:235.78px;font-size:13.6px;line-height:1;font-weight:400;color:#252423;white-space:nowrap;">466</span>
<span class="t" style="position:absolute;right:1097.10px;transform-origin:100% 50%;transform:scaleX(0.9891);top:235.78px;font-size:13.6px;line-height:1;font-weight:400;color:#252423;white-space:nowrap;">32937</span>
<span class="t" style="position:absolute;left:557.30px;transform-origin:0 50%;transform:scaleX(0.9889);top:258.02px;font-size:13.6px;line-height:1;font-weight:400;color:#252423;white-space:nowrap;">Katrina</span>
<span class="t" style="position:absolute;right:1165.80px;transform-origin:100% 50%;transform:scaleX(1.0138);top:258.02px;font-size:13.6px;line-height:1;font-weight:400;color:#252423;white-space:nowrap;">465</span>
<span class="t" style="position:absolute;right:1097.10px;transform-origin:100% 50%;transform:scaleX(0.9891);top:258.02px;font-size:13.6px;line-height:1;font-weight:400;color:#252423;white-space:nowrap;">32472</span>
<span class="t" style="position:absolute;left:557.30px;transform-origin:0 50%;transform:scaleX(0.9690);top:280.26px;font-size:13.6px;line-height:1;font-weight:400;color:#252423;white-space:nowrap;">Girish</span>
<span class="t" style="position:absolute;right:1165.80px;transform-origin:100% 50%;transform:scaleX(1.0138);top:280.26px;font-size:13.6px;line-height:1;font-weight:400;color:#252423;white-space:nowrap;">456</span>
<span class="t" style="position:absolute;right:1097.10px;transform-origin:100% 50%;transform:scaleX(0.9891);top:280.26px;font-size:13.6px;line-height:1;font-weight:400;color:#252423;white-space:nowrap;">35157</span>
<span class="t" style="position:absolute;left:557.30px;transform-origin:0 50%;transform:scaleX(1.0162);top:302.50px;font-size:13.6px;line-height:1;font-weight:400;color:#252423;white-space:nowrap;">Joginder</span>
<span class="t" style="position:absolute;right:1165.80px;transform-origin:100% 50%;transform:scaleX(1.0138);top:302.50px;font-size:13.6px;line-height:1;font-weight:400;color:#252423;white-space:nowrap;">456</span>
<span class="t" style="position:absolute;right:1097.10px;transform-origin:100% 50%;transform:scaleX(0.9891);top:302.50px;font-size:13.6px;line-height:1;font-weight:400;color:#252423;white-space:nowrap;">36053</span>
<span class="t" style="position:absolute;left:557.30px;transform-origin:0 50%;transform:scaleX(0.9781);top:324.74px;font-size:13.6px;line-height:1;font-weight:400;color:#252423;white-space:nowrap;">Akshay</span>
<span class="t" style="position:absolute;right:1165.80px;transform-origin:100% 50%;transform:scaleX(1.0138);top:324.74px;font-size:13.6px;line-height:1;font-weight:400;color:#252423;white-space:nowrap;">452</span>
<span class="t" style="position:absolute;right:1097.10px;transform-origin:100% 50%;transform:scaleX(0.9891);top:324.74px;font-size:13.6px;line-height:1;font-weight:400;color:#252423;white-space:nowrap;">37227</span>
<span class="t" style="position:absolute;left:557.30px;transform-origin:0 50%;transform:scaleX(1.0021);top:346.98px;font-size:13.6px;line-height:1;font-weight:400;color:#252423;white-space:nowrap;">Rohit</span>
<span class="t" style="position:absolute;right:1165.80px;transform-origin:100% 50%;transform:scaleX(1.0138);top:346.98px;font-size:13.6px;line-height:1;font-weight:400;color:#252423;white-space:nowrap;">433</span>
<span class="t" style="position:absolute;right:1097.10px;transform-origin:100% 50%;transform:scaleX(0.9891);top:346.98px;font-size:13.6px;line-height:1;font-weight:400;color:#252423;white-space:nowrap;">32001</span>
<span class="t" style="position:absolute;left:557.30px;transform-origin:0 50%;transform:scaleX(1.0176);top:369.22px;font-size:13.6px;line-height:1;font-weight:400;color:#252423;white-space:nowrap;">Abhishhek</span>
<span class="t" style="position:absolute;right:1165.80px;transform-origin:100% 50%;transform:scaleX(1.0138);top:369.22px;font-size:13.6px;line-height:1;font-weight:400;color:#252423;white-space:nowrap;">398</span>
<span class="t" style="position:absolute;right:1097.10px;transform-origin:100% 50%;transform:scaleX(0.9891);top:369.22px;font-size:13.6px;line-height:1;font-weight:400;color:#252423;white-space:nowrap;">35654</span>
<span class="t" style="position:absolute;left:557.30px;transform-origin:0 50%;transform:scaleX(1.0165);top:391.46px;font-size:13.6px;line-height:1;font-weight:400;color:#252423;white-space:nowrap;">Anjali</span>
<span class="t" style="position:absolute;right:1165.80px;transform-origin:100% 50%;transform:scaleX(1.0138);top:391.46px;font-size:13.6px;line-height:1;font-weight:400;color:#252423;white-space:nowrap;">398</span>
<span class="t" style="position:absolute;right:1097.10px;transform-origin:100% 50%;transform:scaleX(0.9891);top:391.46px;font-size:13.6px;line-height:1;font-weight:400;color:#252423;white-space:nowrap;">35658</span>
<span class="t" style="position:absolute;left:557.30px;transform-origin:0 50%;transform:scaleX(0.9674);top:413.70px;font-size:13.6px;line-height:1;font-weight:400;color:#252423;white-space:nowrap;">Harsha</span>
<span class="t" style="position:absolute;right:1165.80px;transform-origin:100% 50%;transform:scaleX(1.0138);top:413.70px;font-size:13.6px;line-height:1;font-weight:400;color:#252423;white-space:nowrap;">398</span>
<span class="t" style="position:absolute;right:1097.10px;transform-origin:100% 50%;transform:scaleX(0.9891);top:413.70px;font-size:13.6px;line-height:1;font-weight:400;color:#252423;white-space:nowrap;">33631</span>
<span class="t" style="position:absolute;left:557.30px;transform-origin:0 50%;transform:scaleX(0.9846);top:435.94px;font-size:13.6px;line-height:1;font-weight:400;color:#252423;white-space:nowrap;">Jacqueline</span>
<span class="t" style="position:absolute;right:1165.80px;transform-origin:100% 50%;transform:scaleX(1.0138);top:435.94px;font-size:13.6px;line-height:1;font-weight:400;color:#252423;white-space:nowrap;">398</span>
<span class="t" style="position:absolute;right:1097.10px;transform-origin:100% 50%;transform:scaleX(0.9891);top:435.94px;font-size:13.6px;line-height:1;font-weight:400;color:#252423;white-space:nowrap;">35656</span>
<span class="t" style="position:absolute;left:557.30px;transform-origin:0 50%;transform:scaleX(0.9564);top:458.18px;font-size:13.6px;line-height:1;font-weight:400;color:#252423;white-space:nowrap;">Jenelia</span>
<span class="t" style="position:absolute;right:1165.80px;transform-origin:100% 50%;transform:scaleX(1.0138);top:458.18px;font-size:13.6px;line-height:1;font-weight:400;color:#252423;white-space:nowrap;">398</span>
<span class="t" style="position:absolute;right:1097.10px;transform-origin:100% 50%;transform:scaleX(0.9891);top:458.18px;font-size:13.6px;line-height:1;font-weight:400;color:#252423;white-space:nowrap;">35653</span>
<span class="t" style="position:absolute;left:557.30px;transform-origin:0 50%;transform:scaleX(0.9649);top:480.42px;font-size:13.6px;line-height:1;font-weight:400;color:#252423;white-space:nowrap;">Kareena</span>
<span class="t" style="position:absolute;right:1165.80px;transform-origin:100% 50%;transform:scaleX(1.0138);top:480.42px;font-size:13.6px;line-height:1;font-weight:400;color:#252423;white-space:nowrap;">398</span>
<span class="t" style="position:absolute;right:1097.10px;transform-origin:100% 50%;transform:scaleX(0.9891);top:480.42px;font-size:13.6px;line-height:1;font-weight:400;color:#252423;white-space:nowrap;">33630</span>
<span class="t" style="position:absolute;left:557.30px;transform-origin:0 50%;transform:scaleX(1.0045);top:502.66px;font-size:13.6px;line-height:1;font-weight:400;color:#252423;white-space:nowrap;">Nayantara</span>
<span class="t" style="position:absolute;right:1165.80px;transform-origin:100% 50%;transform:scaleX(1.0138);top:502.66px;font-size:13.6px;line-height:1;font-weight:400;color:#252423;white-space:nowrap;">398</span>
<span class="t" style="position:absolute;right:1097.10px;transform-origin:100% 50%;transform:scaleX(0.9891);top:502.66px;font-size:13.6px;line-height:1;font-weight:400;color:#252423;white-space:nowrap;">35659</span>
<span class="t" style="position:absolute;left:557.30px;transform-origin:0 50%;transform:scaleX(0.9908);top:524.90px;font-size:13.6px;line-height:1;font-weight:400;color:#252423;white-space:nowrap;">Samantha</span>
<span class="t" style="position:absolute;right:1165.80px;transform-origin:100% 50%;transform:scaleX(1.0138);top:524.90px;font-size:13.6px;line-height:1;font-weight:400;color:#252423;white-space:nowrap;">398</span>
<span class="t" style="position:absolute;right:1097.10px;transform-origin:100% 50%;transform:scaleX(0.9891);top:524.90px;font-size:13.6px;line-height:1;font-weight:400;color:#252423;white-space:nowrap;">33630</span>
<span class="t" style="position:absolute;left:557.30px;transform-origin:0 50%;transform:scaleX(0.9564);top:547.14px;font-size:13.6px;line-height:1;font-weight:400;color:#252423;white-space:nowrap;">Shreya</span>
<span class="t" style="position:absolute;right:1165.80px;transform-origin:100% 50%;transform:scaleX(1.0138);top:547.14px;font-size:13.6px;line-height:1;font-weight:400;color:#252423;white-space:nowrap;">398</span>
<span class="t" style="position:absolute;right:1097.10px;transform-origin:100% 50%;transform:scaleX(0.9891);top:547.14px;font-size:13.6px;line-height:1;font-weight:400;color:#252423;white-space:nowrap;">35657</span>
<span class="t" style="position:absolute;left:557.30px;transform-origin:0 50%;transform:scaleX(0.9717);top:569.38px;font-size:13.6px;line-height:1;font-weight:400;color:#252423;white-space:nowrap;">Soniya</span>
<span class="t" style="position:absolute;right:1165.80px;transform-origin:100% 50%;transform:scaleX(1.0138);top:569.38px;font-size:13.6px;line-height:1;font-weight:400;color:#252423;white-space:nowrap;">398</span>
<span class="t" style="position:absolute;right:1097.10px;transform-origin:100% 50%;transform:scaleX(0.9891);top:569.38px;font-size:13.6px;line-height:1;font-weight:400;color:#252423;white-space:nowrap;">33631</span>
<span class="t" style="position:absolute;left:557.30px;transform-origin:0 50%;transform:scaleX(0.9516);top:591.62px;font-size:13.6px;line-height:1;font-weight:400;color:#252423;white-space:nowrap;">Kiara</span>
<span class="t" style="position:absolute;right:1165.80px;transform-origin:100% 50%;transform:scaleX(1.0138);top:591.62px;font-size:13.6px;line-height:1;font-weight:400;color:#252423;white-space:nowrap;">387</span>
<span class="t" style="position:absolute;right:1097.10px;transform-origin:100% 50%;transform:scaleX(1.0164);top:591.62px;font-size:13.6px;line-height:1;font-weight:400;color:#252423;white-space:nowrap;">31181</span>
<span class="t" style="position:absolute;left:557.30px;transform-origin:0 50%;transform:scaleX(0.9877);top:613.86px;font-size:13.6px;line-height:1;font-weight:400;color:#252423;white-space:nowrap;">Harish</span>
<span class="t" style="position:absolute;right:1165.80px;transform-origin:100% 50%;transform:scaleX(1.0138);top:613.86px;font-size:13.6px;line-height:1;font-weight:400;color:#252423;white-space:nowrap;">367</span>
<span class="t" style="position:absolute;right:1097.10px;transform-origin:100% 50%;transform:scaleX(0.9891);top:613.86px;font-size:13.6px;line-height:1;font-weight:400;color:#252423;white-space:nowrap;">35625</span>
<span class="t" style="position:absolute;left:557.30px;transform-origin:0 50%;transform:scaleX(1.0085);top:636.10px;font-size:13.6px;line-height:1;font-weight:400;color:#252423;white-space:nowrap;">Abhilash</span>
<span class="t" style="position:absolute;right:1165.80px;transform-origin:100% 50%;transform:scaleX(1.0138);top:636.10px;font-size:13.6px;line-height:1;font-weight:400;color:#252423;white-space:nowrap;">345</span>
<span class="t" style="position:absolute;right:1097.10px;transform-origin:100% 50%;transform:scaleX(0.9891);top:636.10px;font-size:13.6px;line-height:1;font-weight:400;color:#252423;white-space:nowrap;">34702</span>
<span class="t" style="position:absolute;left:557.30px;transform-origin:0 50%;transform:scaleX(0.9633);top:658.34px;font-size:13.6px;line-height:1;font-weight:400;color:#252423;white-space:nowrap;">Salman</span>
<span class="t" style="position:absolute;right:1165.80px;transform-origin:100% 50%;transform:scaleX(1.0138);top:658.34px;font-size:13.6px;line-height:1;font-weight:400;color:#252423;white-space:nowrap;">345</span>
<span class="t" style="position:absolute;right:1097.10px;transform-origin:100% 50%;transform:scaleX(0.9891);top:658.34px;font-size:13.6px;line-height:1;font-weight:400;color:#252423;white-space:nowrap;">34388</span>
<span class="t" style="position:absolute;left:557.30px;transform-origin:0 50%;transform:scaleX(0.9880);top:680.58px;font-size:13.6px;line-height:1;font-weight:400;color:#252423;white-space:nowrap;clip-path:inset(0 0 2.3px 0);">Alia</span>
<span class="t" style="position:absolute;right:1165.80px;transform-origin:100% 50%;transform:scaleX(1.0138);top:680.58px;font-size:13.6px;line-height:1;font-weight:400;color:#252423;white-space:nowrap;clip-path:inset(0 0 2.3px 0);">297</span>
<span class="t" style="position:absolute;right:1097.10px;transform-origin:100% 50%;transform:scaleX(0.9891);top:680.58px;font-size:13.6px;line-height:1;font-weight:400;color:#252423;white-space:nowrap;clip-path:inset(0 0 2.3px 0);">33718</span>
<span class="t" style="position:absolute;left:557.30px;transform-origin:0 50%;transform:scaleX(1.0073);top:698.98px;font-size:13.6px;line-height:1;font-weight:700;color:#1b1a19;white-space:nowrap;">Total</span>
<span class="t" style="position:absolute;right:1165.70px;transform-origin:100% 50%;transform:scaleX(1.0678);top:698.98px;font-size:13.6px;line-height:1;font-weight:700;color:#1b1a19;white-space:nowrap;">8738</span>
<span class="t" style="position:absolute;left:955.60px;transform-origin:0 50%;transform:scaleX(1.0949);top:358.02px;font-size:16px;line-height:1;font-weight:400;color:#252423;white-space:nowrap;">Sum of 10th Marks by Name</span>
<span class="t" style="position:absolute;right:918.80px;top:701.97px;font-size:12.4px;line-height:1;font-weight:400;color:#605e5c;white-space:nowrap;">0</span>
<span class="t" style="position:absolute;right:918.80px;top:638.21px;font-size:12.4px;line-height:1;font-weight:400;color:#605e5c;white-space:nowrap;">100</span>
<span class="t" style="position:absolute;right:918.80px;top:574.45px;font-size:12.4px;line-height:1;font-weight:400;color:#605e5c;white-space:nowrap;">200</span>
<span class="t" style="position:absolute;right:918.80px;top:510.69px;font-size:12.4px;line-height:1;font-weight:400;color:#605e5c;white-space:nowrap;">300</span>
<span class="t" style="position:absolute;right:918.80px;top:446.93px;font-size:12.4px;line-height:1;font-weight:400;color:#605e5c;white-space:nowrap;">400</span>
<span class="t" style="position:absolute;right:918.80px;top:383.17px;font-size:12.4px;line-height:1;font-weight:400;color:#605e5c;white-space:nowrap;">500</span>
<span class="t" style="position:absolute;right:889.55px;transform-origin:100% 50%;transform:rotate(-90deg) translateY(0.5px) scaleX(0.9408);top:708.00px;font-size:12.4px;line-height:1;font-weight:400;color:#605e5c;white-space:nowrap;">Ashish</span>
<span class="t" style="position:absolute;right:867.08px;transform-origin:100% 50%;transform:rotate(-90deg) translateY(0.5px) scaleX(0.9932);top:708.00px;font-size:12.4px;line-height:1;font-weight:400;color:#605e5c;white-space:nowrap;">Katrina</span>
<span class="t" style="position:absolute;right:844.61px;transform-origin:100% 50%;transform:rotate(-90deg) translateY(0.5px) scaleX(0.9580);top:708.00px;font-size:12.4px;line-height:1;font-weight:400;color:#605e5c;white-space:nowrap;">Girish</span>
<span class="t" style="position:absolute;right:822.14px;transform-origin:100% 50%;transform:rotate(-90deg) translateY(0.5px) scaleX(0.9993);top:708.00px;font-size:12.4px;line-height:1;font-weight:400;color:#605e5c;white-space:nowrap;">Joginder</span>
<span class="t" style="position:absolute;right:799.67px;transform-origin:100% 50%;transform:rotate(-90deg) translateY(0.5px) scaleX(0.9719);top:708.00px;font-size:12.4px;line-height:1;font-weight:400;color:#605e5c;white-space:nowrap;">Akshay</span>
<span class="t" style="position:absolute;right:777.20px;transform-origin:100% 50%;transform:rotate(-90deg) translateY(0.5px) scaleX(1.0022);top:708.00px;font-size:12.4px;line-height:1;font-weight:400;color:#605e5c;white-space:nowrap;">Rohit</span>
<span class="t" style="position:absolute;right:754.73px;transform-origin:100% 50%;transform:rotate(-90deg) translateY(0.5px) scaleX(1.0194);top:708.00px;font-size:12.4px;line-height:1;font-weight:400;color:#605e5c;white-space:nowrap;">Abhishhek</span>
<span class="t" style="position:absolute;right:732.26px;transform-origin:100% 50%;transform:rotate(-90deg) translateY(0.5px) scaleX(1.0227);top:708.00px;font-size:12.4px;line-height:1;font-weight:400;color:#605e5c;white-space:nowrap;">Anjali</span>
<span class="t" style="position:absolute;right:709.79px;transform-origin:100% 50%;transform:rotate(-90deg) translateY(0.5px) scaleX(0.9636);top:708.00px;font-size:12.4px;line-height:1;font-weight:400;color:#605e5c;white-space:nowrap;">Harsha</span>
<span class="t" style="position:absolute;right:687.32px;transform-origin:100% 50%;transform:rotate(-90deg) translateY(0.5px) scaleX(0.9789);top:708.00px;font-size:12.4px;line-height:1;font-weight:400;color:#605e5c;white-space:nowrap;">Jacqueline</span>
<span class="t" style="position:absolute;right:664.85px;transform-origin:100% 50%;transform:rotate(-90deg) translateY(0.5px) scaleX(0.9423);top:708.00px;font-size:12.4px;line-height:1;font-weight:400;color:#605e5c;white-space:nowrap;">Jenelia</span>
<span class="t" style="position:absolute;right:642.38px;transform-origin:100% 50%;transform:rotate(-90deg) translateY(0.5px) scaleX(0.9603);top:708.00px;font-size:12.4px;line-height:1;font-weight:400;color:#605e5c;white-space:nowrap;">Kareena</span>
<span class="t" style="position:absolute;right:619.91px;transform-origin:100% 50%;transform:rotate(-90deg) translateY(0.5px) scaleX(0.9970);top:708.00px;font-size:12.4px;line-height:1;font-weight:400;color:#605e5c;white-space:nowrap;">Nayantara</span>
<span class="t" style="position:absolute;right:597.44px;transform-origin:100% 50%;transform:rotate(-90deg) translateY(0.5px) scaleX(0.9826);top:708.00px;font-size:12.4px;line-height:1;font-weight:400;color:#605e5c;white-space:nowrap;">Samantha</span>
<span class="t" style="position:absolute;right:574.97px;transform-origin:100% 50%;transform:rotate(-90deg) translateY(0.5px) scaleX(0.9423);top:708.00px;font-size:12.4px;line-height:1;font-weight:400;color:#605e5c;white-space:nowrap;">Shreya</span>
<span class="t" style="position:absolute;right:552.50px;transform-origin:100% 50%;transform:rotate(-90deg) translateY(0.5px) scaleX(0.9633);top:708.00px;font-size:12.4px;line-height:1;font-weight:400;color:#605e5c;white-space:nowrap;">Soniya</span>
<span class="t" style="position:absolute;right:530.03px;transform-origin:100% 50%;transform:rotate(-90deg) translateY(0.5px) scaleX(0.9503);top:708.00px;font-size:12.4px;line-height:1;font-weight:400;color:#605e5c;white-space:nowrap;">Kiara</span>
<span class="t" style="position:absolute;right:507.56px;transform-origin:100% 50%;transform:rotate(-90deg) translateY(0.5px) scaleX(0.9773);top:708.00px;font-size:12.4px;line-height:1;font-weight:400;color:#605e5c;white-space:nowrap;">Harish</span>
<span class="t" style="position:absolute;right:485.09px;transform-origin:100% 50%;transform:rotate(-90deg) translateY(0.5px) scaleX(1.0099);top:708.00px;font-size:12.4px;line-height:1;font-weight:400;color:#605e5c;white-space:nowrap;">Abhilash</span>
<span class="t" style="position:absolute;left:964.40px;transform:translateX(-50%) rotate(-90deg) scaleX(1.1122);top:540.80px;font-size:13.4px;line-height:1;font-weight:400;color:#252423;white-space:nowrap;">Sum of 10th Marks</span>
<span class="t" style="position:absolute;left:1230.20px;transform:translateX(-50%) scaleX(1.0301);top:785.09px;font-size:14.2px;line-height:1;font-weight:400;color:#252423;white-space:nowrap;">Name</span>
<span class="t" style="position:absolute;left:1669.80px;transform-origin:0 50%;transform:scaleX(1.0252);top:279.33px;font-size:16.8px;line-height:1;font-weight:400;color:#252423;white-space:nowrap;">Abhilash</span>
<span class="t" style="position:absolute;left:1669.80px;transform-origin:0 50%;transform:scaleX(0.9876);top:308.95px;font-size:16.8px;line-height:1;font-weight:400;color:#252423;white-space:nowrap;">Abhishhek</span>
<span class="t" style="position:absolute;left:1669.80px;transform-origin:0 50%;transform:scaleX(0.9736);top:339.57px;font-size:16.8px;line-height:1;font-weight:400;color:#252423;white-space:nowrap;">Aishwariya</span>
<span class="t" style="position:absolute;left:1669.80px;transform-origin:0 50%;transform:scaleX(0.9558);top:370.19px;font-size:16.8px;line-height:1;font-weight:400;color:#252423;white-space:nowrap;">Akshay</span>
<span class="t" style="position:absolute;left:1669.80px;transform-origin:0 50%;transform:scaleX(0.9720);top:400.81px;font-size:16.8px;line-height:1;font-weight:400;color:#252423;white-space:nowrap;">Alia</span>
<span class="t" style="position:absolute;left:1669.80px;transform-origin:0 50%;transform:scaleX(0.9842);top:431.43px;font-size:16.8px;line-height:1;font-weight:400;color:#252423;white-space:nowrap;">Anjali</span>
<span class="t" style="position:absolute;left:1669.80px;transform-origin:0 50%;transform:scaleX(0.9449);top:462.05px;font-size:16.8px;line-height:1;font-weight:400;color:#252423;white-space:nowrap;">Ashish</span>
<span class="t" style="position:absolute;left:1669.80px;transform-origin:0 50%;transform:scaleX(0.9492);top:492.67px;font-size:16.8px;line-height:1;font-weight:400;color:#252423;white-space:nowrap;">Girish</span>
<span class="t" style="position:absolute;left:1669.80px;transform-origin:0 50%;transform:scaleX(0.9567);top:523.29px;font-size:16.8px;line-height:1;font-weight:400;color:#252423;white-space:nowrap;">Harish</span>
<span class="t" style="position:absolute;left:1669.80px;transform-origin:0 50%;transform:scaleX(0.9425);top:553.91px;font-size:16.8px;line-height:1;font-weight:400;color:#252423;white-space:nowrap;">Harsha</span>
<span class="t" style="position:absolute;left:1899.90px;transform:translateX(-50%) rotate(90deg) scaleX(1.0694);top:205.20px;font-size:18px;line-height:1;font-weight:400;color:#252423;white-space:nowrap;-webkit-text-stroke:0.54px #252423;">Filters</span>
<span class="t" style="position:absolute;left:1821.40px;transform-origin:0 50%;transform:scaleX(0.9480);top:879.50px;font-size:14.6px;line-height:1;font-weight:400;color:#605e5c;white-space:nowrap;">85%</span>
<span class="t" style="position:absolute;left:1425.80px;transform-origin:0 50%;transform:scaleX(1.0490);top:115.23px;font-size:17px;line-height:1;font-weight:400;color:#3b3a39;white-space:nowrap;-webkit-text-stroke:0.51px #3b3a39;">Pinned to dashboard</span>
<span class="t" style="position:absolute;left:1425.80px;transform-origin:0 50%;transform:scaleX(1.0187);top:142.73px;font-size:17px;line-height:1;font-weight:400;color:#484644;white-space:nowrap;">The visualization has been pinned to your dashboard.</span>
<span class="t" style="position:absolute;left:1425.80px;transform-origin:0 50%;transform:scaleX(1.0331);top:165.73px;font-size:17px;line-height:1;font-weight:400;color:#484644;white-space:nowrap;">You can now create a mobile layout to optimize your</span>
<span class="t" style="position:absolute;left:1425.80px;transform-origin:0 50%;transform:scaleX(1.0166);top:188.73px;font-size:17px;line-height:1;font-weight:400;color:#484644;white-space:nowrap;">dashboard for mobile devices as well.</span>
<span class="t" style="position:absolute;left:1449.70px;transform-origin:0 50%;transform:scaleX(1.0306);top:233.13px;font-size:17px;line-height:1;font-weight:400;color:#fff;white-space:nowrap;">Create mobile layout</span>
<span class="t" style="position:absolute;left:1671.90px;transform-origin:0 50%;transform:scaleX(1.0232);top:233.13px;font-size:17px;line-height:1;font-weight:400;color:#252423;white-space:nowrap;">Go to dashboard</span>
</body></html>
